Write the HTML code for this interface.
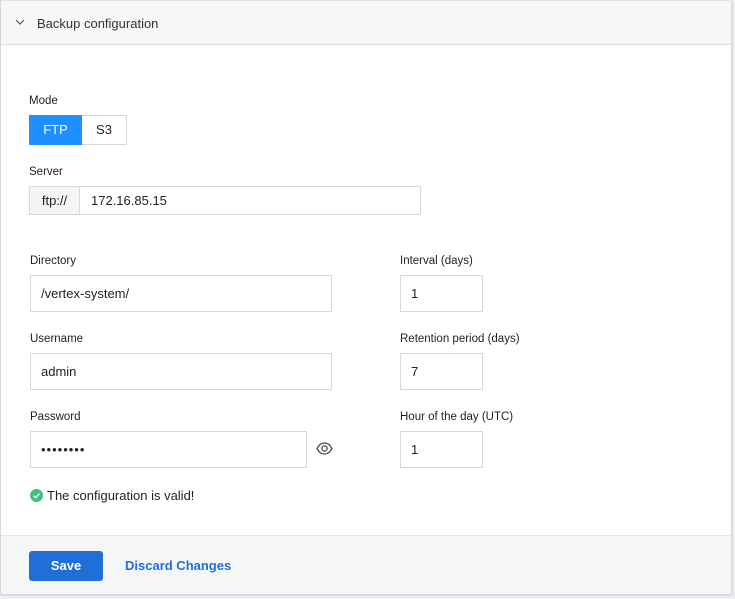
<!DOCTYPE html>
<html><head><style>
*{box-sizing:border-box;margin:0;padding:0}
body{width:735px;height:599px;background:#eceef1;font-family:"Liberation Sans",sans-serif;color:#222;position:relative;overflow:hidden;font-size:13px}
.card{position:absolute;left:0;top:0;width:732px;height:594px;background:#fff;border:1px solid #d6d6d6;border-top-color:#e3e3e3;box-shadow:0 1px 2px rgba(0,0,0,.15)}
.hdr{position:absolute;left:0;top:0;width:730px;height:44px;background:#f7f7f7;border-bottom:1px solid #dcdcdc}
.foot{position:absolute;left:0;top:534px;width:730px;height:59px;background:#f5f6f8;border-top:1px solid #e6e7ea}
.a{position:absolute}
.lbl{position:absolute;font-size:11.5px;color:#222}
.inp{position:absolute;border:1px solid #d8d8d8;background:#fff;height:37px;font-size:13px;line-height:35px;padding-left:10px;color:#222}
</style></head><body>
<div class="card">
<div class="hdr">
<svg class="a" style="left:14px;top:18px" width="10" height="7" viewBox="0 0 10 7"><path d="M1 1l4 4 4-4" fill="none" stroke="#555" stroke-width="1.2"/></svg>
<div class="a" style="left:36px;top:15px;font-size:13px;color:#333">Backup configuration</div>
</div>
<div class="lbl" style="left:28px;top:94px">Mode</div>
<div class="a" style="left:28px;top:114px;width:53px;height:30px;background:#1e8fff;color:#fff;text-align:center;line-height:30px;font-size:13px">FTP</div>
<div class="a" style="left:81px;top:114px;width:45px;height:30px;border:1px solid #d8d8d8;border-left:none;text-align:center;line-height:28px;font-size:13px">S3</div>
<div class="lbl" style="left:28px;top:165px">Server</div>
<div class="a" style="left:28px;top:185px;width:51px;height:29px;background:#f5f5f5;border:1px solid #d8d8d8;text-align:center;line-height:27px">ftp://</div>
<div class="a" style="left:78px;top:185px;width:342px;height:29px;border:1px solid #d8d8d8;padding-left:11px;line-height:27px">172.16.85.15</div>

<div class="lbl" style="left:29px;top:254px">Directory</div>
<div class="inp" style="left:29px;top:274px;width:302px">/vertex-system/</div>
<div class="lbl" style="left:29px;top:332px">Username</div>
<div class="inp" style="left:29px;top:352px;width:302px">admin</div>
<div class="lbl" style="left:29px;top:410px">Password</div>
<div class="inp" style="left:29px;top:430px;width:277px;letter-spacing:1px">••••••••</div>
<svg class="a" style="left:315px;top:441px" width="17" height="13" viewBox="0 0 17 13"><path d="M1 6.5C3 2.5 6 1 8.5 1S14 2.5 16 6.5C14 10.5 11 12 8.5 12S3 10.5 1 6.5Z" fill="none" stroke="#444" stroke-width="1.3"/><circle cx="8.5" cy="6.5" r="2.6" fill="none" stroke="#444" stroke-width="1.3"/></svg>

<div class="lbl" style="left:399px;top:254px">Interval (days)</div>
<div class="inp" style="left:399px;top:274px;width:83px">1</div>
<div class="lbl" style="left:399px;top:332px">Retention period (days)</div>
<div class="inp" style="left:399px;top:352px;width:83px">7</div>
<div class="lbl" style="left:399px;top:410px">Hour of the day (UTC)</div>
<div class="inp" style="left:399px;top:430px;width:83px">1</div>

<svg class="a" style="left:29px;top:488px" width="13" height="13" viewBox="0 0 13 13"><circle cx="6.5" cy="6.5" r="6.5" fill="#3fc27a"/><path d="M3.6 6.7l2 2 3.8-4" fill="none" stroke="#fff" stroke-width="1.5"/></svg>
<div class="a" style="left:46px;top:487px;font-size:13px;color:#222">The configuration is valid!</div>

<div class="foot">
<div class="a" style="left:28px;top:15px;width:74px;height:30px;background:#1f6fd6;border-radius:3px;color:#fff;text-align:center;line-height:30px;font-size:13px;font-weight:bold">Save</div>
<div class="a" style="left:124px;top:22px;color:#1f6fd6;font-size:13px;font-weight:bold">Discard Changes</div>
</div>
</div>
</body></html>
